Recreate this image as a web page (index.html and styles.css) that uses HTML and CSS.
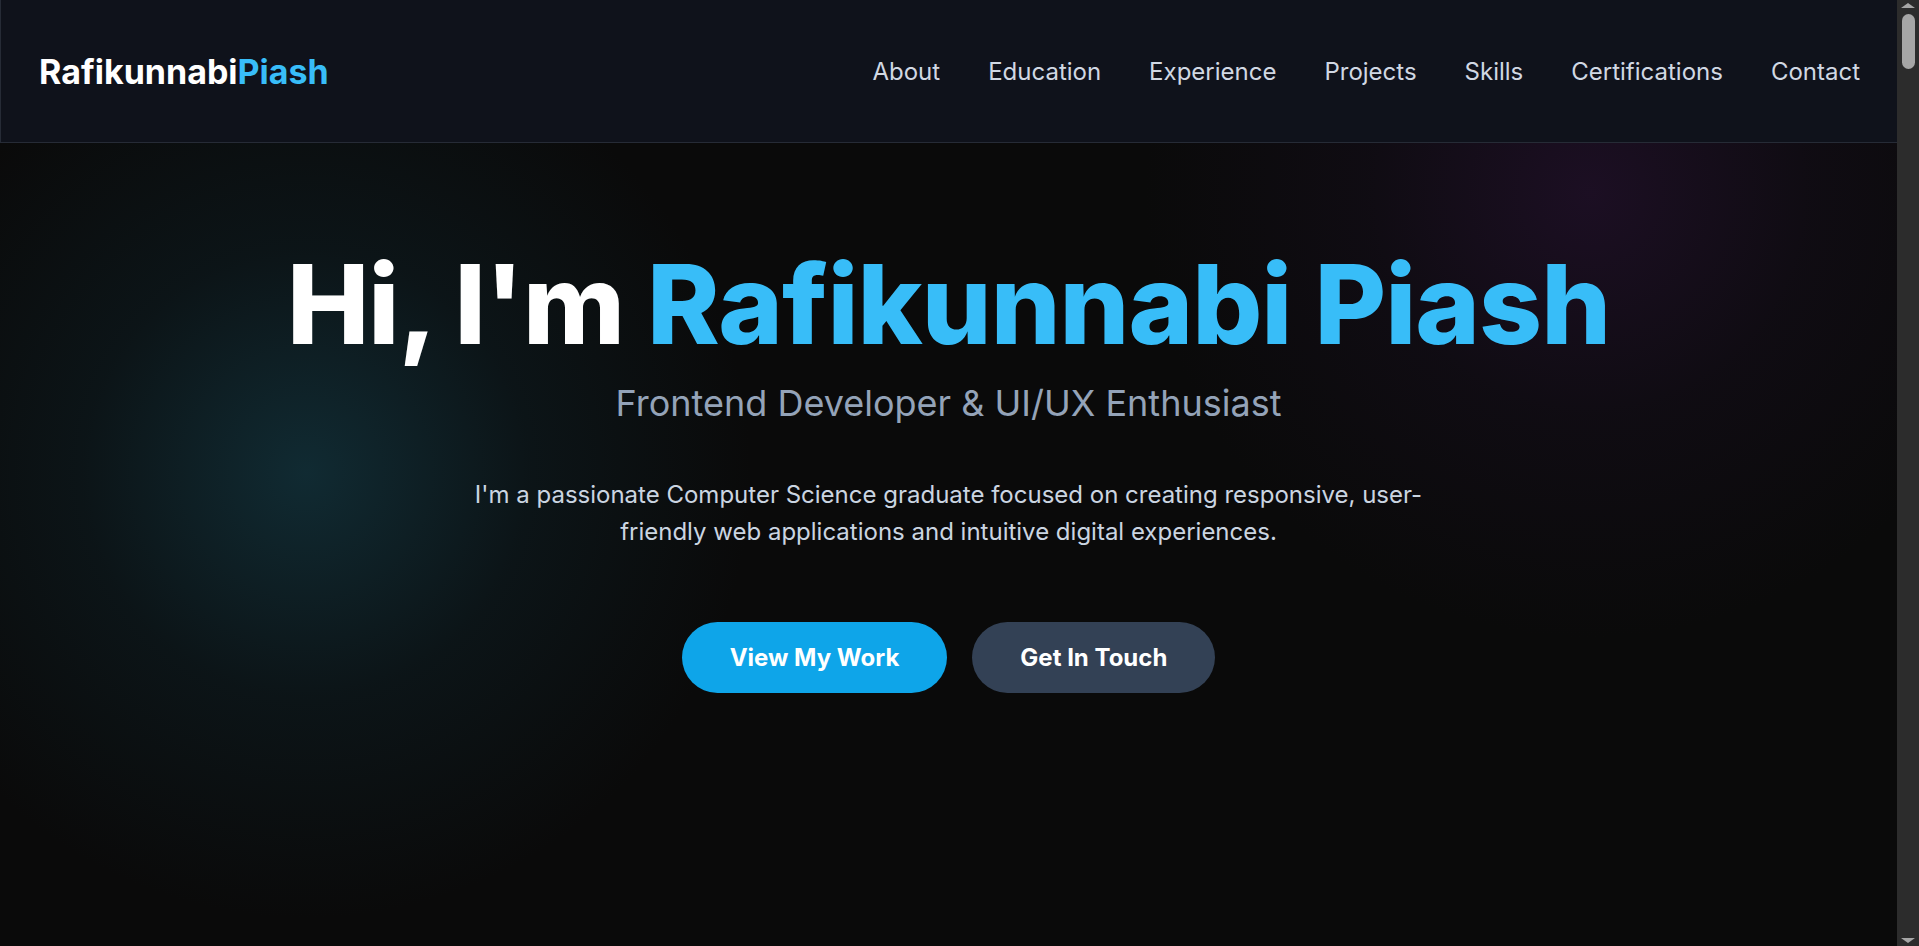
FILE: index.html
```html
<!DOCTYPE html>
<html lang="en">
<head>
<meta charset="utf-8">
<title>Rafikunnabi Piash — Portfolio</title>
<link rel="stylesheet" href="styles.css">
</head>
<body>
<header class="site-header">
  <a class="logo" href="#">Rafikunnabi<span class="accent">Piash</span></a>
  <nav class="nav">
    <a href="#about">About</a>
    <a href="#education">Education</a>
    <a href="#experience">Experience</a>
    <a href="#projects">Projects</a>
    <a href="#skills">Skills</a>
    <a href="#certifications">Certifications</a>
    <a href="#contact">Contact</a>
  </nav>
</header>
<main>
  <section class="hero">
    <div class="glow glow-teal"></div>
    <div class="glow glow-purple"></div>
    <div class="hero-inner">
      <h1 class="hero-title">Hi, I'm <span class="accent">Rafikunnabi Piash</span></h1>
      <p class="hero-sub">Frontend Developer &amp; UI/UX Enthusiast</p>
      <p class="hero-text">I'm a passionate Computer Science graduate focused on creating responsive, user-friendly web applications and intuitive digital experiences.</p>
      <div class="hero-actions">
        <a class="btn btn-primary" href="#projects">View My Work</a>
        <a class="btn btn-secondary" href="#contact">Get In Touch</a>
      </div>
    </div>
  </section>
  <section class="section" id="about"></section>
  <section class="section" id="education"></section>
  <section class="section" id="experience"></section>
  <section class="section" id="projects"></section>
  <section class="section" id="skills"></section>
  <section class="section" id="certifications"></section>
  <section class="section" id="contact"></section>
</main>
<div class="scrollbar" aria-hidden="true">
  <span class="sb-arrow sb-up"></span>
  <span class="sb-thumb"></span>
  <span class="sb-arrow sb-down"></span>
</div>
</body>
</html>
```
FILE: styles.css
```css
* { box-sizing: border-box; }
html { background: #0a0a0a; }
body {
  margin: 0 22px 0 0;
  background: #0a0a0a;
  color: #fff;
  font-family: Inter, "Noto Sans", sans-serif;
}
a { text-decoration: none; color: inherit; }

/* window scrollbar look */
.scrollbar {
  position: fixed;
  top: 0;
  right: 0;
  width: 22px;
  height: 100vh;
  background: #2c2c2c;
  z-index: 10;
}
.sb-thumb {
  position: absolute;
  left: 5px;
  top: 14px;
  width: 13px;
  height: 55px;
  border-radius: 7px;
  background: #a6a6a6;
}
.sb-arrow {
  position: absolute;
  left: 4px;
  width: 0;
  height: 0;
  border-left: 7.5px solid transparent;
  border-right: 7.5px solid transparent;
}
.sb-up { top: 3px; border-bottom: 5px solid #a6a6a6; }
.sb-down { bottom: 3px; border-top: 5px solid #a6a6a6; }

.site-header {
  height: 143px;
  display: flex;
  align-items: center;
  justify-content: space-between;
  padding: 0 37px 0 38px;
  background: #0f121b;
  border-left: 1px solid #262b36;
  border-bottom: 1px solid #262b36;
  position: relative;
  z-index: 2;
}
.logo {
  font-size: 34px;
  font-weight: 700;
  color: #fff;
}
.accent { color: #38bdf8; }
.nav {
  display: flex;
  gap: 48px;
}
.nav a {
  font-size: 24px;
  color: #d1d8e3;
}

.hero {
  position: relative;
  overflow: hidden;
  height: 803px;
  background: #0a0a0a;
}
.glow {
  position: absolute;
  border-radius: 50%;
  pointer-events: none;
}
.glow-teal {
  width: 900px;
  height: 900px;
  left: -144px;
  top: -120px;
  background: radial-gradient(circle, rgba(20, 60, 72, 0.65) 0%, rgba(16, 44, 54, 0.3) 35%, rgba(10, 10, 10, 0) 70%);
}
.glow-purple {
  width: 900px;
  height: 900px;
  left: 1140px;
  top: -400px;
  background: radial-gradient(circle, rgba(40, 18, 52, 0.6) 0%, rgba(28, 16, 38, 0.3) 35%, rgba(10, 10, 10, 0) 70%);
}
.hero-inner {
  position: relative;
  display: flex;
  flex-direction: column;
  align-items: center;
  text-align: center;
  padding-top: 106px;
}
.hero-title {
  margin: 0;
  font-size: 110px;
  line-height: 1;
  font-weight: 800;
  letter-spacing: -1px;
}
.hero-sub {
  margin: 23px 0 0;
  font-size: 36px;
  line-height: 1.2;
  color: #94a3b8;
  font-weight: 400;
}
.hero-text {
  margin: 51px 0 0;
  max-width: 990px;
  font-size: 24px;
  line-height: 37px;
  color: #cbd5e1;
}
.hero-actions {
  display: flex;
  gap: 25px;
  margin-top: 72px;
}
.btn {
  display: inline-block;
  height: 71px;
  line-height: 71px;
  padding: 0 48px;
  border-radius: 36px;
  font-size: 24px;
  font-weight: 700;
  color: #fff;
}
.btn-primary { background: #0ea5e9; }
.btn-secondary { background: #334155; }

.section {
  min-height: 2080px;
  background: #0a0a0a;
}
```
